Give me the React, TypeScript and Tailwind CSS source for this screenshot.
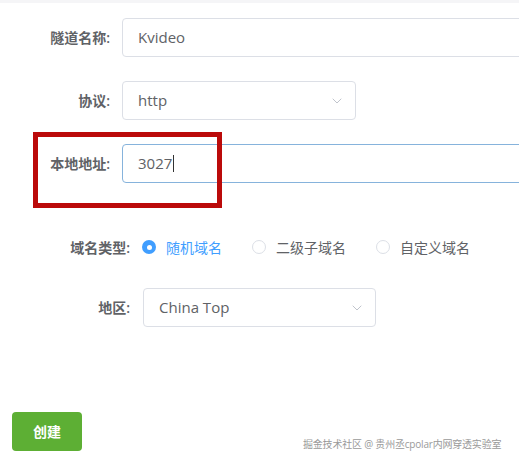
import { ChevronDown } from 'lucide-react';

const font = "font-['Open_Sans','Noto_Sans_CJK_SC',sans-serif]";

function Label({ text, width }: { text: string; width: string }) {
  return (
    <div className={`${width} shrink-0 text-right text-[14px] font-semibold text-[#606266]`}>
      {text}
    </div>
  );
}

function Radio({ label, checked }: { label: string; checked?: boolean }) {
  return (
    <div className="flex items-center gap-[10px]">
      {checked ? (
        <span className="flex h-[14px] w-[14px] items-center justify-center rounded-full bg-[#409eff]">
          <span className="h-[5px] w-[5px] rounded-full bg-white" />
        </span>
      ) : (
        <span className="h-[14px] w-[14px] rounded-full border border-[#dcdfe6] bg-white" />
      )}
      <span className={`text-[14px] ${checked ? 'text-[#409eff]' : 'text-[#606266]'}`}>
        {label}
      </span>
    </div>
  );
}

export default function App() {
  return (
    <div className={`relative h-[462px] w-[519px] overflow-hidden bg-white ${font}`}>
      <div className="h-[3px] bg-[#f5f5f7]" />

      {/* 隧道名称 */}
      <div className="mt-[15px] flex items-center">
        <Label text="隧道名称:" width="w-[110px]" />
        <div className="ml-[12px] flex h-[39px] w-[420px] shrink-0 items-center rounded-[4px] border border-[#dcdfe6] pl-[15px] text-[15px] text-[#606266]">
          Kvideo
        </div>
      </div>

      {/* 协议 */}
      <div className="mt-[24px] flex items-center">
        <Label text="协议:" width="w-[110px]" />
        <div className="ml-[12px] flex h-[39px] w-[234px] items-center justify-between rounded-[4px] border border-[#dcdfe6] pl-[15px] pr-[10px] text-[15px] text-[#606266]">
          <span>http</span>
          <ChevronDown className="h-[16px] w-[16px] text-[#c0c4cc]" strokeWidth={1.5} />
        </div>
      </div>

      {/* 本地地址 */}
      <div className="mt-[24px] flex items-center">
        <Label text="本地地址:" width="w-[110px]" />
        <div className="ml-[12px] flex h-[39px] w-[420px] shrink-0 items-center rounded-[4px] border border-[#86b3dc] pl-[15px] text-[15px] text-[#606266]">
          3027
          <span className="ml-[1px] h-[17px] w-px bg-[#333]" />
        </div>
      </div>

      {/* 域名类型 */}
      <div className="mt-[54px] flex h-[20px] items-center">
        <Label text="域名类型:" width="w-[130px]" />
        <div className="ml-[12px] flex items-center gap-[30px]">
          <Radio label="随机域名" checked />
          <Radio label="二级子域名" />
          <Radio label="自定义域名" />
        </div>
      </div>

      {/* 地区 */}
      <div className="mt-[31px] flex items-center">
        <Label text="地区:" width="w-[130px]" />
        <div className="ml-[13px] flex h-[39px] w-[233px] items-center justify-between rounded-[4px] border border-[#dcdfe6] pl-[15px] pr-[10px] text-[15px] text-[#606266]">
          <span>China Top</span>
          <ChevronDown className="h-[16px] w-[16px] text-[#c0c4cc]" strokeWidth={1.5} />
        </div>
      </div>

      <button className="ml-[12px] mt-[85px] flex h-[39px] w-[70px] items-center justify-center rounded-[4px] bg-[#5daf34] text-[14px] font-semibold text-white">
        创建
      </button>

      {/* 高亮框 */}
      <div className="absolute left-[33px] top-[132px] h-[76px] w-[189px] border-[5px] border-[#bb0a0a]" />

      {/* 水印 */}
      <div className="absolute left-[303px] top-[437px] whitespace-nowrap text-[10px] tracking-[-0.2px] text-[#9a9a9a]">
        掘金技术社区 @ 贵州丞cpolar内网穿透实验室
      </div>
    </div>
  );
}
